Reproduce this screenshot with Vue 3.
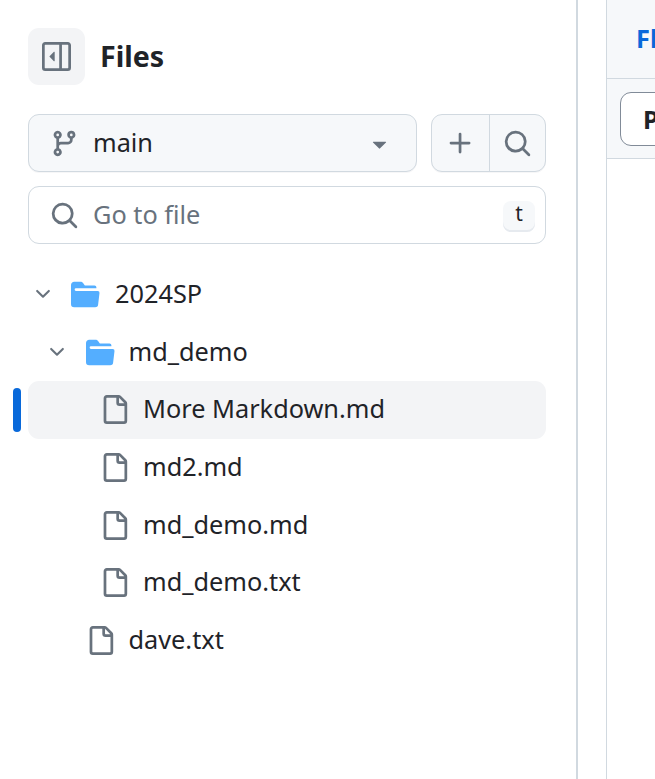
<script setup>
const chevron = 'M12.78 5.22a.749.749 0 0 1 0 1.06l-4.25 4.25a.749.749 0 0 1-1.06 0L3.22 6.28a.749.749 0 1 1 1.06-1.06L8 8.939l3.72-3.719a.749.749 0 0 1 1.06 0Z'
const folder = 'M.513 1.513A1.75 1.75 0 0 1 1.75 1h3.5c.55 0 1.07.26 1.4.7l.9 1.2a.25.25 0 0 0 .2.1H13a1 1 0 0 1 1 1v.5H2.75a.75.75 0 0 0 0 1.5h11.978a1 1 0 0 1 .994 1.117L15 13.25A1.75 1.75 0 0 1 13.25 15H1.75A1.75 1.75 0 0 1 0 13.25V2.75c0-.464.184-.91.513-1.237Z'
const file = 'M2 1.75C2 .784 2.784 0 3.75 0h6.586c.464 0 .909.184 1.237.513l2.914 2.914c.329.328.513.773.513 1.237v9.586A1.75 1.75 0 0 1 13.25 16h-9.5A1.75 1.75 0 0 1 2 14.25Zm1.75-.25a.25.25 0 0 0-.25.25v12.5c0 .138.112.25.25.25h9.5a.25.25 0 0 0 .25-.25V6h-2.75A1.75 1.75 0 0 1 9 4.25V1.5Zm6.75.062V4.25c0 .138.112.25.25.25h2.688l-.011-.013-2.914-2.914-.013-.011Z'
const search = 'M10.68 11.74a6 6 0 0 1-7.922-8.982 6 6 0 0 1 8.982 7.922l3.04 3.04a.749.749 0 0 1-.326 1.275.749.749 0 0 1-.734-.215ZM11.5 7a4.499 4.499 0 1 0-8.997 0A4.499 4.499 0 0 0 11.5 7Z'

const rows = [
  { name: '2024SP', type: 'dir', depth: 0 },
  { name: 'md_demo', type: 'dir', depth: 1 },
  { name: 'More Markdown.md', type: 'file', depth: 2, current: true },
  { name: 'md2.md', type: 'file', depth: 2 },
  { name: 'md_demo.md', type: 'file', depth: 2 },
  { name: 'md_demo.txt', type: 'file', depth: 2 },
  { name: 'dave.txt', type: 'file', depth: 1 },
]
</script>

<template>
  <div class="page">
    <aside class="sidebar">
      <div class="head">
        <button class="panel-btn" aria-label="Collapse file tree">
          <svg class="icon" viewBox="0 0 16 16">
            <path d="M4.177 7.823l2.396-2.396A.25.25 0 0 1 7 5.604v4.792a.25.25 0 0 1-.427.177L4.177 8.177a.25.25 0 0 1 0-.354Z" />
            <path d="M1.75 0h12.5C15.216 0 16 .784 16 1.75v12.5A1.75 1.75 0 0 1 14.25 16H1.75A1.75 1.75 0 0 1 0 14.25V1.75C0 .784.784 0 1.75 0ZM1.5 1.75v12.5c0 .138.112.25.25.25H9.5v-13H1.75a.25.25 0 0 0-.25.25ZM11 14.5h3.25a.25.25 0 0 0 .25-.25V1.75a.25.25 0 0 0-.25-.25H11Z" />
          </svg>
        </button>
        <h2>Files</h2>
      </div>

      <div class="branch-row">
        <button class="branch">
          <svg class="icon" viewBox="0 0 16 16">
            <path d="M9.5 3.25a2.25 2.25 0 1 1 3 2.122V6A2.5 2.5 0 0 1 10 8.5H6a1 1 0 0 0-1 1v1.128a2.251 2.251 0 1 1-1.5 0V5.372a2.25 2.25 0 1 1 1.5 0v1.836A2.493 2.493 0 0 1 6 7h4a1 1 0 0 0 1-1v-.628A2.25 2.25 0 0 1 9.5 3.25Zm-6 0a.75.75 0 1 0 1.5 0 .75.75 0 0 0-1.5 0Zm8.25-.75a.75.75 0 1 0 0 1.5.75.75 0 0 0 0-1.5ZM4.25 12a.75.75 0 1 0 0 1.5.75.75 0 0 0 0-1.5Z" />
          </svg>
          <span class="branch-name">main</span>
          <svg class="icon" viewBox="0 0 16 16">
            <path d="m4.427 7.427 3.396 3.396a.25.25 0 0 0 .354 0l3.396-3.396A.25.25 0 0 0 11.396 7H4.604a.25.25 0 0 0-.177.427Z" />
          </svg>
        </button>
        <div class="btn-group">
          <button aria-label="Add file">
            <svg class="icon" viewBox="0 0 16 16">
              <path d="M7.75 2a.75.75 0 0 1 .75.75V7h4.25a.75.75 0 0 1 0 1.5H8.5v4.25a.75.75 0 0 1-1.5 0V8.5H2.75a.75.75 0 0 1 0-1.5H7V2.75A.75.75 0 0 1 7.75 2Z" />
            </svg>
          </button>
          <button aria-label="Search">
            <svg class="icon" viewBox="0 0 16 16"><path :d="search" /></svg>
          </button>
        </div>
      </div>

      <div class="goto">
        <svg class="icon" viewBox="0 0 16 16"><path :d="search" /></svg>
        <span class="placeholder">Go to file</span>
        <kbd>t</kbd>
      </div>

      <ul class="tree">
        <li
          v-for="row in rows"
          :key="row.name"
          class="row"
          :class="[`depth-${row.depth}`, { current: row.current }]"
        >
          <svg v-if="row.type === 'dir'" class="icon chevron" viewBox="0 0 16 16"><path :d="chevron" /></svg>
          <svg v-if="row.type === 'dir'" class="icon folder" viewBox="0 0 16 16"><path :d="folder" /></svg>
          <svg v-else class="icon file" viewBox="0 0 16 16"><path :d="file" /></svg>
          <span class="name">{{ row.name }}</span>
        </li>
      </ul>
    </aside>

    <div class="gutter"></div>

    <main class="main">
      <div class="tabs"><span class="tab">Fl</span></div>
      <div class="toolbar"><button class="preview">P</button></div>
    </main>
  </div>
</template>

<style>
html,
body {
  margin: 0;
  overflow: hidden;
  background: #fff;
}
</style>

<style scoped>
.page {
  display: flex;
  width: 655px;
  height: 779px;
  overflow: hidden;
  font-family: "Noto Sans", sans-serif;
  color: #1f2328;
}

button {
  font: inherit;
  color: inherit;
  padding: 0;
  cursor: pointer;
}

.icon {
  display: block;
  width: 29px;
  height: 29px;
  flex: none;
  fill: #68727d;
}

.sidebar {
  flex: none;
  box-sizing: border-box;
  width: 578px;
  padding: 28px 30px 0 28px;
  border-right: 2px solid #d1d9e0;
}

.head {
  display: flex;
  align-items: center;
  gap: 15px;
  height: 57px;
}

.panel-btn {
  display: flex;
  align-items: center;
  justify-content: center;
  width: 57px;
  height: 57px;
  border: none;
  border-radius: 11px;
  background: #f3f4f6;
}

h2 {
  margin: 0 0 1px;
  font-size: 28.6px;
  font-weight: 700;
  line-height: 1;
}

.branch-row {
  display: flex;
  gap: 14px;
  margin-top: 29px;
}

.branch {
  display: flex;
  flex: 1;
  align-items: center;
  box-sizing: border-box;
  height: 58px;
  padding: 0 22px 0 20.5px;
  border: 1.5px solid #d1d9e0;
  border-radius: 11px;
  background: #f6f8fa;
  box-shadow: 0 1px 0 rgba(31, 35, 40, 0.04);
  font-size: 25.3px;
}

.branch-name {
  flex: 1;
  margin: 0 0 2px 14.5px;
  text-align: left;
}

.btn-group {
  display: flex;
  flex: none;
  box-sizing: border-box;
  width: 115px;
  height: 58px;
  border: 1.5px solid #d1d9e0;
  border-radius: 11px;
  background: #f6f8fa;
  box-shadow: 0 1px 0 rgba(31, 35, 40, 0.04);
}

.btn-group button {
  display: flex;
  align-items: center;
  justify-content: center;
  border: none;
  background: none;
}

.btn-group button:first-child {
  flex: none;
  width: 57px;
}

.btn-group button + button {
  flex: 1;
  border-left: 1.5px solid #d1d9e0;
}

.goto {
  display: flex;
  align-items: center;
  box-sizing: border-box;
  height: 58px;
  margin-top: 14px;
  padding: 0 10px 0 21px;
  border: 1.5px solid #d1d9e0;
  border-radius: 11px;
  font-size: 25.3px;
}

.placeholder {
  flex: 1;
  margin: 0 0 2px 14px;
  color: #68727d;
}

kbd {
  box-sizing: border-box;
  width: 32px;
  height: 31px;
  margin-top: 3px;
  border-radius: 8px;
  background: #f6f8fa;
  box-shadow: inset 0 -2px 0 #e6eaef;
  font-family: "Noto Sans", sans-serif;
  font-size: 21px;
  line-height: 25px;
  text-align: center;
}

.tree {
  margin: 21.6px 0 0;
  padding: 0;
  list-style: none;
}

.row {
  position: relative;
  display: flex;
  align-items: center;
  height: 57.7px;
  border-radius: 11px;
  font-size: 25.3px;
}

.depth-0 .name {
  margin-left: 15px;
}

.depth-1 {
  padding-left: 14.5px;
}

.depth-2 {
  padding-left: 29px;
}

.file {
  margin-left: 43px;
}

.chevron {
  width: 22px;
  height: 22px;
  margin: 0 3.5px;
}

.folder {
  margin-left: 14px;
  fill: #54aeff;
}

.name {
  margin: 0 0 3px 14px;
}

.current {
  background: #f3f4f6;
}

.current::before {
  content: "";
  position: absolute;
  top: 7px;
  bottom: 7px;
  left: -15px;
  width: 8px;
  border-radius: 4px;
  background: #0969da;
}

.gutter {
  flex: none;
  width: 28px;
}

.main {
  flex: 1;
  min-width: 0;
  border-left: 1.5px solid #d1d9e0;
}

.tabs {
  box-sizing: border-box;
  height: 79px;
  padding: 23px 0 0 29px;
  border-bottom: 1.5px solid #d1d9e0;
  background: #f6f8fa;
  font-size: 25.3px;
  font-weight: 700;
  line-height: 30px;
  color: #0969da;
  white-space: nowrap;
}

.toolbar {
  box-sizing: border-box;
  height: 80px;
  padding: 13px 0 0 13px;
  border-bottom: 1.5px solid #d1d9e0;
  background: #f6f8fa;
  white-space: nowrap;
}

.preview {
  box-sizing: border-box;
  width: 80px;
  height: 54px;
  padding: 0 0 0 22px;
  border: 1.5px solid #818b98;
  border-radius: 11px;
  background: #fff;
  font-size: 25.3px;
  font-weight: 700;
  text-align: left;
}
</style>
